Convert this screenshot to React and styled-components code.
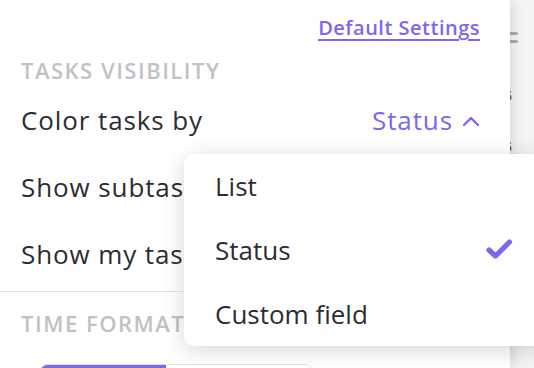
import React from "react";
import styled, { createGlobalStyle } from "styled-components";

const Global = createGlobalStyle`
  html, body { margin: 0; padding: 0; }
  body { font-family: "Open Sans", "Liberation Sans", sans-serif; background: #f4f4f5; overflow: hidden; }
`;

const Frame = styled.div`
  position: relative;
  display: flex;
  width: 534px;
  height: 368px;
  overflow: hidden;
  background: #f4f4f5;
`;

const Panel = styled.div`
  position: relative;
  z-index: 1;
  width: 510px;
  flex: none;
  background: #fff;
  box-shadow: 0 0 14px rgba(0, 0, 0, 0.16);
  display: flex;
  flex-direction: column;
`;

const Strip = styled.div`
  flex: 1;
  display: flex;
  flex-direction: column;
  padding-top: 32px;
  overflow: hidden;
`;

const Bars = styled.div`
  display: flex;
  flex-direction: column;
  gap: 5px;
  margin-left: -4px;
`;

const Bar = styled.span`
  display: block;
  width: 12px;
  height: 3px;
  border-radius: 2px;
  background: #a9acb3;
`;

const Clipped = styled.div`
  margin-top: 44px;
  margin-left: -6px;
  display: flex;
  flex-direction: column;
  font-size: 14px;
  line-height: 17px;
  font-weight: 700;
  color: #5b5f66;
`;

const Header = styled.div`
  display: flex;
  justify-content: flex-end;
  padding: 16px 30px 0;
  height: 24px;
`;

const Link = styled.a`
  font-size: 20px;
  line-height: 24px;
  font-weight: 600;
  color: #7b68ee;
  text-decoration: underline;
  text-underline-offset: 4px;
  text-decoration-thickness: 2px;
  letter-spacing: 0.5px;
`;

const Section = styled.div`
  display: flex;
  flex-direction: column;
  padding-top: ${(p) => p.$top}px;
  padding-bottom: ${(p) => p.$bottom || 0}px;
  border-bottom: ${(p) => (p.$divider ? "1px solid #e4e4e6" : "none")};
`;

const Heading = styled.div`
  padding-left: 21px;
  font-size: 22px;
  line-height: 20px;
  font-weight: 600;
  letter-spacing: 1.5px;
  color: #c0c2c6;
  text-transform: uppercase;
  white-space: nowrap;
  margin-bottom: ${(p) => p.$gap}px;
`;

const Row = styled.div`
  display: flex;
  align-items: center;
  justify-content: space-between;
  height: 67px;
  padding: 0 30px 0 21px;
  font-size: 26px;
  letter-spacing: 0.9px;
  line-height: 67px;
  color: #2a2e34;
  white-space: nowrap;
`;

const Value = styled.span`
  display: flex;
  align-items: center;
  gap: 9px;
  color: #7b68ee;
`;

const Segmented = styled.div`
  display: flex;
  margin-left: 40px;
  width: 270px;
  height: 40px;
  border: 1px solid #e2e2e4;
  border-radius: 7px;
  overflow: hidden;
`;

const Segment = styled.div`
  width: ${(p) => p.$w}px;
  background: ${(p) => (p.$active ? "#7b68ee" : "#fff")};
`;

const Menu = styled.div`
  position: absolute;
  z-index: 2;
  left: 184px;
  top: 154px;
  width: 360px;
  background: #fff;
  border-radius: 10px;
  box-shadow: 0 4px 22px rgba(0, 0, 0, 0.16);
  display: flex;
  flex-direction: column;
`;

const Item = styled.div`
  display: flex;
  align-items: center;
  justify-content: space-between;
  height: 64px;
  padding: 0 31px 0 31px;
  font-size: 26px;
  letter-spacing: 0px;
  line-height: 64px;
  color: #2a2e34;
`;

const Chevron = () => (
  <svg width="18" height="12" viewBox="0 0 18 12" fill="none">
    <path d="M2 10 L9 3 L16 10" stroke="#7b68ee" strokeWidth="2.4" strokeLinecap="round" strokeLinejoin="round" />
  </svg>
);

const Check = () => (
  <svg width="28" height="22" viewBox="0 0 28 22" fill="none">
    <path d="M4 11 L10.5 17 L24.5 3" stroke="#7b68ee" strokeWidth="5.2" strokeLinecap="round" strokeLinejoin="round" />
  </svg>
);

export default function App() {
  return (
    <>
      <Global />
      <Frame>
        <Panel>
          <Header>
            <Link>Default Settings</Link>
          </Header>
          <Section $top={20} $bottom={3} $divider>
            <Heading $gap={7}>Tasks visibility</Heading>
            <Row>
              <span>Color tasks by</span>
              <Value>
                Status <Chevron />
              </Value>
            </Row>
            <Row>
              <span>Show subtasks</span>
            </Row>
            <Row>
              <span>Show my tasks only</span>
            </Row>
          </Section>
          <Section $top={21}>
            <Heading $gap={31}>Time format</Heading>
            <Segmented>
              <Segment $active $w={125} />
              <Segment $w={145} />
            </Segmented>
          </Section>
        </Panel>
        <Strip>
          <Bars>
            <Bar />
            <Bar />
          </Bars>
          <Clipped>
            <span>5</span>
            <span>)</span>
            <span>-</span>
            <span>5</span>
          </Clipped>
        </Strip>
        <Menu>
          <Item>List</Item>
          <Item>
            Status <Check />
          </Item>
          <Item>Custom field</Item>
        </Menu>
      </Frame>
    </>
  );
}
